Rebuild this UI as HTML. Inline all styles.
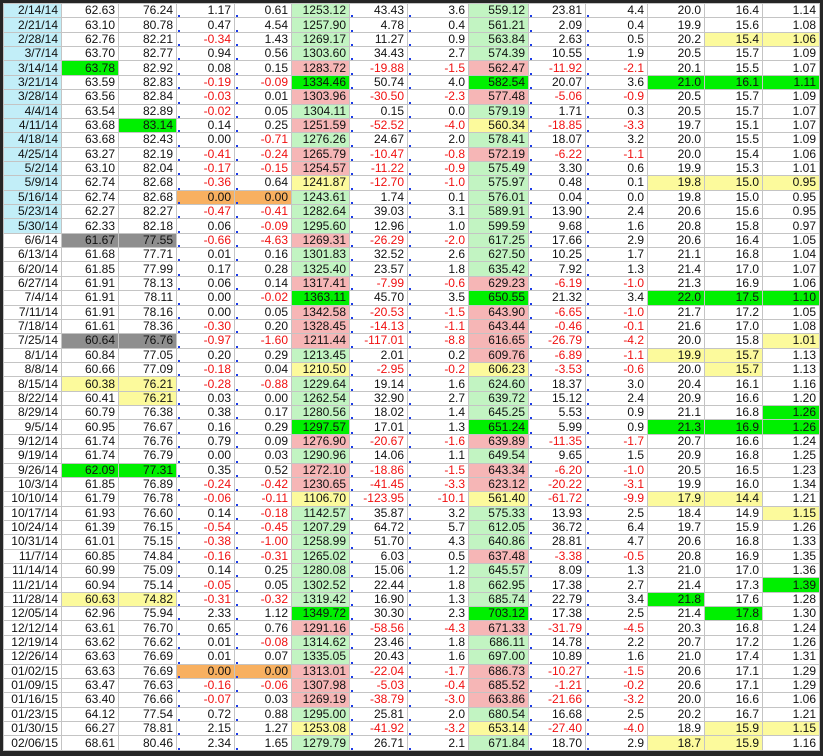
<!DOCTYPE html>
<html><head><meta charset="utf-8"><style>
html,body{margin:0;padding:0;background:#262626;width:823px;height:756px;overflow:hidden}
table{position:absolute;left:3px;top:3px;border-collapse:collapse;table-layout:fixed;width:816px;font-family:"Liberation Sans",Arial,sans-serif;font-size:12px;background:#fff}
td{border:1px solid #c4c4c4;height:13.37px;padding:0 3px 0 0;text-align:right;line-height:13px;white-space:nowrap;overflow:hidden;color:#111;background-color:#fff}
td:nth-child(4),td:nth-child(5),td:nth-child(7),td:nth-child(8),td:nth-child(10),td:nth-child(11){background-image:linear-gradient(#1a3ae8,#1a3ae8);background-repeat:no-repeat;background-position:1px 100%;background-size:2px 2px}
.c{background-color:#c2eef8}
.g{background-color:#c2f4c2}
.r{background-color:#f6b6b6}
.y{background-color:#fcfa9c}
.G{background-color:#00f000}
.o{background-color:#f8b060}
.k{background-color:#8e8e8e}
.n{color:#f01010}
</style></head><body>
<table>
<colgroup><col style="width:58px"><col style="width:57px"><col style="width:58px"><col style="width:58px"><col style="width:57px"><col style="width:58px"><col style="width:58px"><col style="width:61px"><col style="width:60px"><col style="width:57px"><col style="width:62px"><col style="width:57px"><col style="width:58px"><col style="width:57px"></colgroup>
<tr><td class="c">2/14/14</td><td>62.63</td><td>76.24</td><td>1.17</td><td>0.61</td><td class="g">1253.12</td><td>43.43</td><td>3.6</td><td class="g">559.12</td><td>23.81</td><td>4.4</td><td>20.0</td><td>16.4</td><td>1.14</td></tr>
<tr><td class="c">2/21/14</td><td>63.10</td><td>80.78</td><td>0.47</td><td>4.54</td><td class="g">1257.90</td><td>4.78</td><td>0.4</td><td class="g">561.21</td><td>2.09</td><td>0.4</td><td>19.9</td><td>15.6</td><td>1.08</td></tr>
<tr><td class="c">2/28/14</td><td>62.76</td><td>82.21</td><td class="n">-0.34</td><td>1.43</td><td class="g">1269.17</td><td>11.27</td><td>0.9</td><td class="g">563.84</td><td>2.63</td><td>0.5</td><td>20.2</td><td class="y">15.4</td><td class="y">1.06</td></tr>
<tr><td class="c">3/7/14</td><td>63.70</td><td>82.77</td><td>0.94</td><td>0.56</td><td class="g">1303.60</td><td>34.43</td><td>2.7</td><td class="g">574.39</td><td>10.55</td><td>1.9</td><td>20.5</td><td>15.7</td><td>1.09</td></tr>
<tr><td class="c">3/14/14</td><td class="G">63.78</td><td>82.92</td><td>0.08</td><td>0.15</td><td class="r">1283.72</td><td class="n">-19.88</td><td class="n">-1.5</td><td class="r">562.47</td><td class="n">-11.92</td><td class="n">-2.1</td><td>20.1</td><td>15.5</td><td>1.07</td></tr>
<tr><td class="c">3/21/14</td><td>63.59</td><td>82.83</td><td class="n">-0.19</td><td class="n">-0.09</td><td class="G">1334.46</td><td>50.74</td><td>4.0</td><td class="G">582.54</td><td>20.07</td><td>3.6</td><td class="G">21.0</td><td class="G">16.1</td><td class="G">1.11</td></tr>
<tr><td class="c">3/28/14</td><td>63.56</td><td>82.84</td><td class="n">-0.03</td><td>0.01</td><td class="r">1303.96</td><td class="n">-30.50</td><td class="n">-2.3</td><td class="r">577.48</td><td class="n">-5.06</td><td class="n">-0.9</td><td>20.5</td><td>15.7</td><td>1.09</td></tr>
<tr><td class="c">4/4/14</td><td>63.54</td><td>82.89</td><td class="n">-0.02</td><td>0.05</td><td class="g">1304.11</td><td>0.15</td><td>0.0</td><td class="g">579.19</td><td>1.71</td><td>0.3</td><td>20.5</td><td>15.7</td><td>1.07</td></tr>
<tr><td class="c">4/11/14</td><td>63.68</td><td class="G">83.14</td><td>0.14</td><td>0.25</td><td class="r">1251.59</td><td class="n">-52.52</td><td class="n">-4.0</td><td class="y">560.34</td><td class="n">-18.85</td><td class="n">-3.3</td><td>19.7</td><td>15.1</td><td>1.07</td></tr>
<tr><td class="c">4/18/14</td><td>63.68</td><td>82.43</td><td>0.00</td><td class="n">-0.71</td><td class="g">1276.26</td><td>24.67</td><td>2.0</td><td class="g">578.41</td><td>18.07</td><td>3.2</td><td>20.0</td><td>15.5</td><td>1.09</td></tr>
<tr><td class="c">4/25/14</td><td>63.27</td><td>82.19</td><td class="n">-0.41</td><td class="n">-0.24</td><td class="r">1265.79</td><td class="n">-10.47</td><td class="n">-0.8</td><td class="r">572.19</td><td class="n">-6.22</td><td class="n">-1.1</td><td>20.0</td><td>15.4</td><td>1.06</td></tr>
<tr><td class="c">5/2/14</td><td>63.10</td><td>82.04</td><td class="n">-0.17</td><td class="n">-0.15</td><td class="r">1254.57</td><td class="n">-11.22</td><td class="n">-0.9</td><td class="g">575.49</td><td>3.30</td><td>0.6</td><td>19.9</td><td>15.3</td><td>1.01</td></tr>
<tr><td class="c">5/9/14</td><td>62.74</td><td>82.68</td><td class="n">-0.36</td><td>0.64</td><td class="y">1241.87</td><td class="n">-12.70</td><td class="n">-1.0</td><td class="g">575.97</td><td>0.48</td><td>0.1</td><td class="y">19.8</td><td class="y">15.0</td><td class="y">0.95</td></tr>
<tr><td class="c">5/16/14</td><td>62.74</td><td>82.68</td><td class="o">0.00</td><td class="o">0.00</td><td class="g">1243.61</td><td>1.74</td><td>0.1</td><td class="g">576.01</td><td>0.04</td><td>0.0</td><td>19.8</td><td>15.0</td><td>0.95</td></tr>
<tr><td class="c">5/23/14</td><td>62.27</td><td>82.27</td><td class="n">-0.47</td><td class="n">-0.41</td><td class="g">1282.64</td><td>39.03</td><td>3.1</td><td class="g">589.91</td><td>13.90</td><td>2.4</td><td>20.6</td><td>15.6</td><td>0.95</td></tr>
<tr><td class="c">5/30/14</td><td>62.33</td><td>82.18</td><td>0.06</td><td class="n">-0.09</td><td class="g">1295.60</td><td>12.96</td><td>1.0</td><td class="g">599.59</td><td>9.68</td><td>1.6</td><td>20.8</td><td>15.8</td><td>0.97</td></tr>
<tr><td>6/6/14</td><td class="k">61.67</td><td class="k">77.55</td><td class="n">-0.66</td><td class="n">-4.63</td><td class="r">1269.31</td><td class="n">-26.29</td><td class="n">-2.0</td><td class="g">617.25</td><td>17.66</td><td>2.9</td><td>20.6</td><td>16.4</td><td>1.05</td></tr>
<tr><td>6/13/14</td><td>61.68</td><td>77.71</td><td>0.01</td><td>0.16</td><td class="g">1301.83</td><td>32.52</td><td>2.6</td><td class="g">627.50</td><td>10.25</td><td>1.7</td><td>21.1</td><td>16.8</td><td>1.04</td></tr>
<tr><td>6/20/14</td><td>61.85</td><td>77.99</td><td>0.17</td><td>0.28</td><td class="g">1325.40</td><td>23.57</td><td>1.8</td><td class="g">635.42</td><td>7.92</td><td>1.3</td><td>21.4</td><td>17.0</td><td>1.07</td></tr>
<tr><td>6/27/14</td><td>61.91</td><td>78.13</td><td>0.06</td><td>0.14</td><td class="r">1317.41</td><td class="n">-7.99</td><td class="n">-0.6</td><td class="r">629.23</td><td class="n">-6.19</td><td class="n">-1.0</td><td>21.3</td><td>16.9</td><td>1.06</td></tr>
<tr><td>7/4/14</td><td>61.91</td><td>78.11</td><td>0.00</td><td class="n">-0.02</td><td class="G">1363.11</td><td>45.70</td><td>3.5</td><td class="G">650.55</td><td>21.32</td><td>3.4</td><td class="G">22.0</td><td class="G">17.5</td><td class="G">1.10</td></tr>
<tr><td>7/11/14</td><td>61.91</td><td>78.16</td><td>0.00</td><td>0.05</td><td class="r">1342.58</td><td class="n">-20.53</td><td class="n">-1.5</td><td class="r">643.90</td><td class="n">-6.65</td><td class="n">-1.0</td><td>21.7</td><td>17.2</td><td>1.05</td></tr>
<tr><td>7/18/14</td><td>61.61</td><td>78.36</td><td class="n">-0.30</td><td>0.20</td><td class="r">1328.45</td><td class="n">-14.13</td><td class="n">-1.1</td><td class="r">643.44</td><td class="n">-0.46</td><td class="n">-0.1</td><td>21.6</td><td>17.0</td><td>1.08</td></tr>
<tr><td>7/25/14</td><td class="k">60.64</td><td class="k">76.76</td><td class="n">-0.97</td><td class="n">-1.60</td><td class="r">1211.44</td><td class="n">-117.01</td><td class="n">-8.8</td><td class="r">616.65</td><td class="n">-26.79</td><td class="n">-4.2</td><td>20.0</td><td>15.8</td><td class="y">1.01</td></tr>
<tr><td>8/1/14</td><td>60.84</td><td>77.05</td><td>0.20</td><td>0.29</td><td class="g">1213.45</td><td>2.01</td><td>0.2</td><td class="r">609.76</td><td class="n">-6.89</td><td class="n">-1.1</td><td class="y">19.9</td><td class="y">15.7</td><td>1.13</td></tr>
<tr><td>8/8/14</td><td>60.66</td><td>77.09</td><td class="n">-0.18</td><td>0.04</td><td class="y">1210.50</td><td class="n">-2.95</td><td class="n">-0.2</td><td class="y">606.23</td><td class="n">-3.53</td><td class="n">-0.6</td><td>20.0</td><td class="y">15.7</td><td>1.13</td></tr>
<tr><td>8/15/14</td><td class="y">60.38</td><td class="y">76.21</td><td class="n">-0.28</td><td class="n">-0.88</td><td class="g">1229.64</td><td>19.14</td><td>1.6</td><td class="g">624.60</td><td>18.37</td><td>3.0</td><td>20.4</td><td>16.1</td><td>1.16</td></tr>
<tr><td>8/22/14</td><td>60.41</td><td class="y">76.21</td><td>0.03</td><td>0.00</td><td class="g">1262.54</td><td>32.90</td><td>2.7</td><td class="g">639.72</td><td>15.12</td><td>2.4</td><td>20.9</td><td>16.6</td><td>1.20</td></tr>
<tr><td>8/29/14</td><td>60.79</td><td>76.38</td><td>0.38</td><td>0.17</td><td class="g">1280.56</td><td>18.02</td><td>1.4</td><td class="g">645.25</td><td>5.53</td><td>0.9</td><td>21.1</td><td>16.8</td><td class="G">1.26</td></tr>
<tr><td>9/5/14</td><td>60.95</td><td>76.67</td><td>0.16</td><td>0.29</td><td class="G">1297.57</td><td>17.01</td><td>1.3</td><td class="G">651.24</td><td>5.99</td><td>0.9</td><td class="G">21.3</td><td class="G">16.9</td><td class="G">1.26</td></tr>
<tr><td>9/12/14</td><td>61.74</td><td>76.76</td><td>0.79</td><td>0.09</td><td class="r">1276.90</td><td class="n">-20.67</td><td class="n">-1.6</td><td class="r">639.89</td><td class="n">-11.35</td><td class="n">-1.7</td><td>20.7</td><td>16.6</td><td>1.24</td></tr>
<tr><td>9/19/14</td><td>61.74</td><td>76.79</td><td>0.00</td><td>0.03</td><td class="g">1290.96</td><td>14.06</td><td>1.1</td><td class="g">649.54</td><td>9.65</td><td>1.5</td><td>20.9</td><td>16.8</td><td>1.25</td></tr>
<tr><td>9/26/14</td><td class="G">62.09</td><td class="G">77.31</td><td>0.35</td><td>0.52</td><td class="r">1272.10</td><td class="n">-18.86</td><td class="n">-1.5</td><td class="r">643.34</td><td class="n">-6.20</td><td class="n">-1.0</td><td>20.5</td><td>16.5</td><td>1.23</td></tr>
<tr><td>10/3/14</td><td>61.85</td><td>76.89</td><td class="n">-0.24</td><td class="n">-0.42</td><td class="r">1230.65</td><td class="n">-41.45</td><td class="n">-3.3</td><td class="r">623.12</td><td class="n">-20.22</td><td class="n">-3.1</td><td>19.9</td><td>16.0</td><td>1.34</td></tr>
<tr><td>10/10/14</td><td>61.79</td><td>76.78</td><td class="n">-0.06</td><td class="n">-0.11</td><td class="y">1106.70</td><td class="n">-123.95</td><td class="n">-10.1</td><td class="y">561.40</td><td class="n">-61.72</td><td class="n">-9.9</td><td class="y">17.9</td><td class="y">14.4</td><td>1.21</td></tr>
<tr><td>10/17/14</td><td>61.93</td><td>76.60</td><td>0.14</td><td class="n">-0.18</td><td class="g">1142.57</td><td>35.87</td><td>3.2</td><td class="g">575.33</td><td>13.93</td><td>2.5</td><td>18.4</td><td>14.9</td><td class="y">1.15</td></tr>
<tr><td>10/24/14</td><td>61.39</td><td>76.15</td><td class="n">-0.54</td><td class="n">-0.45</td><td class="g">1207.29</td><td>64.72</td><td>5.7</td><td class="g">612.05</td><td>36.72</td><td>6.4</td><td>19.7</td><td>15.9</td><td>1.26</td></tr>
<tr><td>10/31/14</td><td>61.01</td><td>75.15</td><td class="n">-0.38</td><td class="n">-1.00</td><td class="g">1258.99</td><td>51.70</td><td>4.3</td><td class="g">640.86</td><td>28.81</td><td>4.7</td><td>20.6</td><td>16.8</td><td>1.33</td></tr>
<tr><td>11/7/14</td><td>60.85</td><td>74.84</td><td class="n">-0.16</td><td class="n">-0.31</td><td class="g">1265.02</td><td>6.03</td><td>0.5</td><td class="r">637.48</td><td class="n">-3.38</td><td class="n">-0.5</td><td>20.8</td><td>16.9</td><td>1.35</td></tr>
<tr><td>11/14/14</td><td>60.99</td><td>75.09</td><td>0.14</td><td>0.25</td><td class="g">1280.08</td><td>15.06</td><td>1.2</td><td class="g">645.57</td><td>8.09</td><td>1.3</td><td>21.0</td><td>17.0</td><td>1.36</td></tr>
<tr><td>11/21/14</td><td>60.94</td><td>75.14</td><td class="n">-0.05</td><td>0.05</td><td class="g">1302.52</td><td>22.44</td><td>1.8</td><td class="g">662.95</td><td>17.38</td><td>2.7</td><td>21.4</td><td>17.3</td><td class="G">1.39</td></tr>
<tr><td>11/28/14</td><td class="y">60.63</td><td class="y">74.82</td><td class="n">-0.31</td><td class="n">-0.32</td><td class="g">1319.42</td><td>16.90</td><td>1.3</td><td class="g">685.74</td><td>22.79</td><td>3.4</td><td class="G">21.8</td><td>17.6</td><td>1.28</td></tr>
<tr><td>12/05/14</td><td>62.96</td><td>75.94</td><td>2.33</td><td>1.12</td><td class="G">1349.72</td><td>30.30</td><td>2.3</td><td class="G">703.12</td><td>17.38</td><td>2.5</td><td>21.4</td><td class="G">17.8</td><td>1.30</td></tr>
<tr><td>12/12/14</td><td>63.61</td><td>76.70</td><td>0.65</td><td>0.76</td><td class="r">1291.16</td><td class="n">-58.56</td><td class="n">-4.3</td><td class="r">671.33</td><td class="n">-31.79</td><td class="n">-4.5</td><td>20.3</td><td>16.8</td><td>1.24</td></tr>
<tr><td>12/19/14</td><td>63.62</td><td>76.62</td><td>0.01</td><td class="n">-0.08</td><td class="g">1314.62</td><td>23.46</td><td>1.8</td><td class="g">686.11</td><td>14.78</td><td>2.2</td><td>20.7</td><td>17.2</td><td>1.26</td></tr>
<tr><td>12/26/14</td><td>63.63</td><td>76.69</td><td>0.01</td><td>0.07</td><td class="g">1335.05</td><td>20.43</td><td>1.6</td><td class="g">697.00</td><td>10.89</td><td>1.6</td><td>21.0</td><td>17.4</td><td>1.31</td></tr>
<tr><td>01/02/15</td><td>63.63</td><td>76.69</td><td class="o">0.00</td><td class="o">0.00</td><td class="r">1313.01</td><td class="n">-22.04</td><td class="n">-1.7</td><td class="r">686.73</td><td class="n">-10.27</td><td class="n">-1.5</td><td>20.6</td><td>17.1</td><td>1.29</td></tr>
<tr><td>01/09/15</td><td>63.47</td><td>76.63</td><td class="n">-0.16</td><td class="n">-0.06</td><td class="r">1307.98</td><td class="n">-5.03</td><td class="n">-0.4</td><td class="r">685.52</td><td class="n">-1.21</td><td class="n">-0.2</td><td>20.6</td><td>17.1</td><td>1.29</td></tr>
<tr><td>01/16/15</td><td>63.40</td><td>76.66</td><td class="n">-0.07</td><td>0.03</td><td class="r">1269.19</td><td class="n">-38.79</td><td class="n">-3.0</td><td class="r">663.86</td><td class="n">-21.66</td><td class="n">-3.2</td><td>20.0</td><td>16.6</td><td>1.06</td></tr>
<tr><td>01/23/15</td><td>64.12</td><td>77.54</td><td>0.72</td><td>0.88</td><td class="g">1295.00</td><td>25.81</td><td>2.0</td><td class="g">680.54</td><td>16.68</td><td>2.5</td><td>20.2</td><td>16.7</td><td>1.21</td></tr>
<tr><td>01/30/15</td><td>66.27</td><td>78.81</td><td>2.15</td><td>1.27</td><td class="y">1253.08</td><td class="n">-41.92</td><td class="n">-3.2</td><td class="y">653.14</td><td class="n">-27.40</td><td class="n">-4.0</td><td>18.9</td><td class="y">15.9</td><td class="y">1.15</td></tr>
<tr><td>02/06/15</td><td>68.61</td><td>80.46</td><td>2.34</td><td>1.65</td><td class="g">1279.79</td><td>26.71</td><td>2.1</td><td class="g">671.84</td><td>18.70</td><td>2.9</td><td class="y">18.7</td><td class="y">15.9</td><td>1.16</td></tr>
</table>
</body></html>
